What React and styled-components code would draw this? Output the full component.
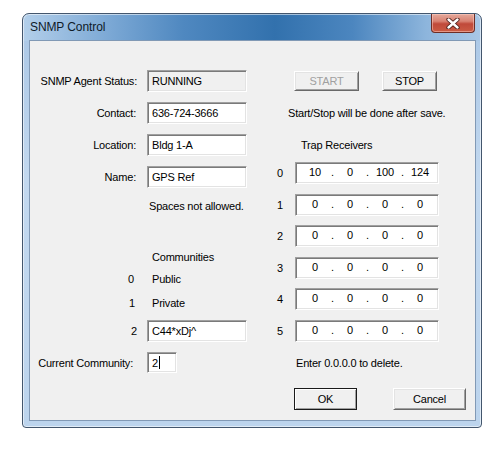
import React from "react";
import { styled, createGlobalStyle } from "styled-components";

const GlobalStyle = createGlobalStyle`
  body {
    margin: 0;
    background: #ffffff;
    font-family: "Liberation Sans", Arial, sans-serif;
    font-size: 11px;
    letter-spacing: -0.2px;
    color: #000;
  }
`;

const Window = styled.div`
  margin: 13px 0 0 22px;
  width: 460px;
  height: 415px;
  box-sizing: border-box;
  border: 1px solid #43566d;
  border-radius: 7px 7px 4px 4px;
  padding: 0 5px 6px 6px;
  display: flex;
  flex-direction: column;
  background:
    linear-gradient(
        90deg,
        #b3cfea 0%,
        #7eaad6 18%,
        #4f88c0 35%,
        #3271ad 55%,
        #4c86bf 72%,
        #8db5dc 88%,
        #a9c7e6 100%
      )
      top / 100% 27px no-repeat,
    linear-gradient(180deg, #a9c6e5 0%, #c2d8ef 40%, #bcd4ed 100%);
  box-shadow: inset 0 0 0 1px rgba(255, 255, 255, 0.55);
`;

const TitleBar = styled.div`
  height: 26px;
  display: flex;
  justify-content: space-between;
  align-items: flex-start;
`;

const Title = styled.div`
  padding: 6px 0 0 1px;
  font-size: 12px;
  line-height: 14px;
  color: #0e1a28;
  letter-spacing: -0.1px;
`;

const CloseButton = styled.div`
  width: 44px;
  height: 19px;
  margin-right: 1px;
  box-sizing: border-box;
  border: 1px solid #6e2e26;
  border-top: none;
  border-radius: 0 0 4px 4px;
  background: linear-gradient(180deg, #e4a99c 0%, #d98272 40%, #c0493a 55%, #cb5c44 100%);
  box-shadow: inset 0 0 0 1px rgba(255, 210, 200, 0.5);
  display: flex;
  align-items: center;
  justify-content: center;
`;

const Client = styled.div`
  flex: 1;
  display: flex;
  background: #f0f0f0;
  border: 1px solid #8199b5;
`;

const LeftPanel = styled.div`
  width: 240px;
  display: flex;
  flex-direction: column;
  padding-top: 29px;
`;

const RightPanel = styled.div`
  flex: 1;
  display: flex;
  flex-direction: column;
  padding-top: 30px;
`;

const FieldRow = styled.div`
  display: grid;
  grid-template-columns: 107px auto;
  column-gap: 10px;
  align-items: center;
  margin-top: ${(p) => p.$mt || 0}px;
`;

const Label = styled.div`
  text-align: right;
  padding-right: ${(p) => p.$pr || 0}px;
  line-height: 14px;
  white-space: nowrap;
`;

const Value = styled.div`
  padding-left: 5px;
  line-height: 14px;
`;

const TextBox = styled.div`
  width: ${(p) => p.$w || 100}px;
  height: ${(p) => p.$h || 22}px;
  box-sizing: border-box;
  background: ${(p) => (p.$readOnly ? "#f0f0f0" : "#ffffff")};
  border: 1px solid;
  border-color: #a0a0a0 #ffffff #ffffff #a0a0a0;
  box-shadow: inset 1px 1px 0 #7a7a7a, inset -1px -1px 0 #e3e3e3;
  padding: 0 4px;
  display: flex;
  align-items: center;
  white-space: nowrap;
`;

const Caret = styled.span`
  display: inline-block;
  width: 1px;
  height: 13px;
  background: #000;
  margin-left: 1px;
`;

const Note = styled.div`
  line-height: 14px;
  margin-top: ${(p) => p.$mt || 0}px;
  padding-left: ${(p) => p.$pl || 0}px;
  white-space: nowrap;
`;

const ButtonRow = styled.div`
  display: flex;
  gap: ${(p) => p.$gap}px;
  padding-left: 24px;
  margin-top: ${(p) => p.$mt || 0}px;
`;

const Button = styled.div`
  width: ${(p) => p.$w}px;
  height: ${(p) => p.$h || 20}px;
  box-sizing: border-box;
  background: #f0f0f0;
  border: 1px solid;
  border-color: ${(p) =>
    p.$default ? "#1a1a1a" : "#ffffff #696969 #696969 #ffffff"};
  box-shadow: ${(p) =>
    p.$default
      ? "inset 1px 1px 0 #ffffff, inset -1px -1px 0 #a0a0a0"
      : "inset 1px 1px 0 #e3e3e3, inset -1px -1px 0 #a0a0a0"};
  display: flex;
  align-items: center;
  justify-content: center;
  color: ${(p) => (p.$disabled ? "#a0a0a0" : "#000")};
`;

const TrapList = styled.div`
  display: flex;
  flex-direction: column;
  gap: 9.6px;
  margin-top: 10px;
`;

const TrapRow = styled.div`
  display: grid;
  grid-template-columns: 25px 144px;
  align-items: center;
`;

const TrapIndex = styled.div`
  padding-left: 7px;
`;

const IpBox = styled.div`
  height: 22px;
  box-sizing: border-box;
  background: #fff;
  border: 1px solid;
  border-color: #a0a0a0 #ffffff #ffffff #a0a0a0;
  box-shadow: inset 1px 1px 0 #7a7a7a, inset -1px -1px 0 #e3e3e3;
  padding: 0 0 2px 6px;
  display: flex;
  align-items: center;
`;

const Octet = styled.span`
  width: 26px;
  text-align: center;
`;

const Dot = styled.span`
  width: 9px;
  text-align: center;
`;

const receivers = [
  ["10", "0", "100", "124"],
  ["0", "0", "0", "0"],
  ["0", "0", "0", "0"],
  ["0", "0", "0", "0"],
  ["0", "0", "0", "0"],
  ["0", "0", "0", "0"],
];

function CloseGlyph() {
  return (
    <svg width="14" height="11" viewBox="0 0 14 11">
      <path d="M2.5 1.5 L11.5 9.5 M11.5 1.5 L2.5 9.5" stroke="#4a1d18" strokeWidth="4.2" strokeLinecap="round" />
      <path d="M2.5 1.5 L11.5 9.5 M11.5 1.5 L2.5 9.5" stroke="#ffffff" strokeWidth="2.4" strokeLinecap="round" />
    </svg>
  );
}

function IpAddress({ parts }) {
  return (
    <IpBox>
      {parts.map((p, i) => (
        <React.Fragment key={i}>
          {i > 0 && <Dot>.</Dot>}
          <Octet>{p}</Octet>
        </React.Fragment>
      ))}
    </IpBox>
  );
}

export default function App() {
  return (
    <>
      <GlobalStyle />
      <Window>
        <TitleBar>
          <Title>SNMP Control</Title>
          <CloseButton>
            <CloseGlyph />
          </CloseButton>
        </TitleBar>
        <Client>
          <LeftPanel>
            <FieldRow>
              <Label>SNMP Agent Status:</Label>
              <TextBox $readOnly>RUNNING</TextBox>
            </FieldRow>
            <FieldRow $mt={10}>
              <Label $pr={1}>Contact:</Label>
              <TextBox>636-724-3666</TextBox>
            </FieldRow>
            <FieldRow $mt={10}>
              <Label $pr={1}>Location:</Label>
              <TextBox>Bldg 1-A</TextBox>
            </FieldRow>
            <FieldRow $mt={10}>
              <Label $pr={1}>Name:</Label>
              <TextBox>GPS Ref</TextBox>
            </FieldRow>
            <Note $mt={11} $pl={119}>
              Spaces not allowed.
            </Note>
            <Note $mt={37} $pl={122}>
              Communities
            </Note>
            <FieldRow $mt={8}>
              <Label $pr={3}>0</Label>
              <Value>Public</Value>
            </FieldRow>
            <FieldRow $mt={10}>
              <Label $pr={2}>1</Label>
              <Value>Private</Value>
            </FieldRow>
            <FieldRow $mt={10}>
              <Label $pr={0}>2</Label>
              <TextBox>C44*xDj^</TextBox>
            </FieldRow>
            <FieldRow $mt={10}>
              <Label $pr={4}>Current Community:</Label>
              <TextBox $w={30} $h={21}>
                2<Caret />
              </TextBox>
            </FieldRow>
          </LeftPanel>
          <RightPanel>
            <ButtonRow $gap={23}>
              <Button $w={65} $disabled>
                START
              </Button>
              <Button $w={55}>STOP</Button>
            </ButtonRow>
            <Note $mt={15} $pl={18}>
              Start/Stop will be done after save.
            </Note>
            <Note $mt={18} $pl={31}>
              Trap Receivers
            </Note>
            <TrapList>
              {receivers.map((parts, i) => (
                <TrapRow key={i}>
                  <TrapIndex>{i}</TrapIndex>
                  <IpAddress parts={parts} />
                </TrapRow>
              ))}
            </TrapList>
            <Note $mt={14} $pl={26}>
              Enter 0.0.0.0 to delete.
            </Note>
            <ButtonRow $gap={36} $mt={18}>
              <Button $w={63} $h={22} $default>
                OK
              </Button>
              <Button $w={73} $h={22}>
                Cancel
              </Button>
            </ButtonRow>
          </RightPanel>
        </Client>
      </Window>
    </>
  );
}
